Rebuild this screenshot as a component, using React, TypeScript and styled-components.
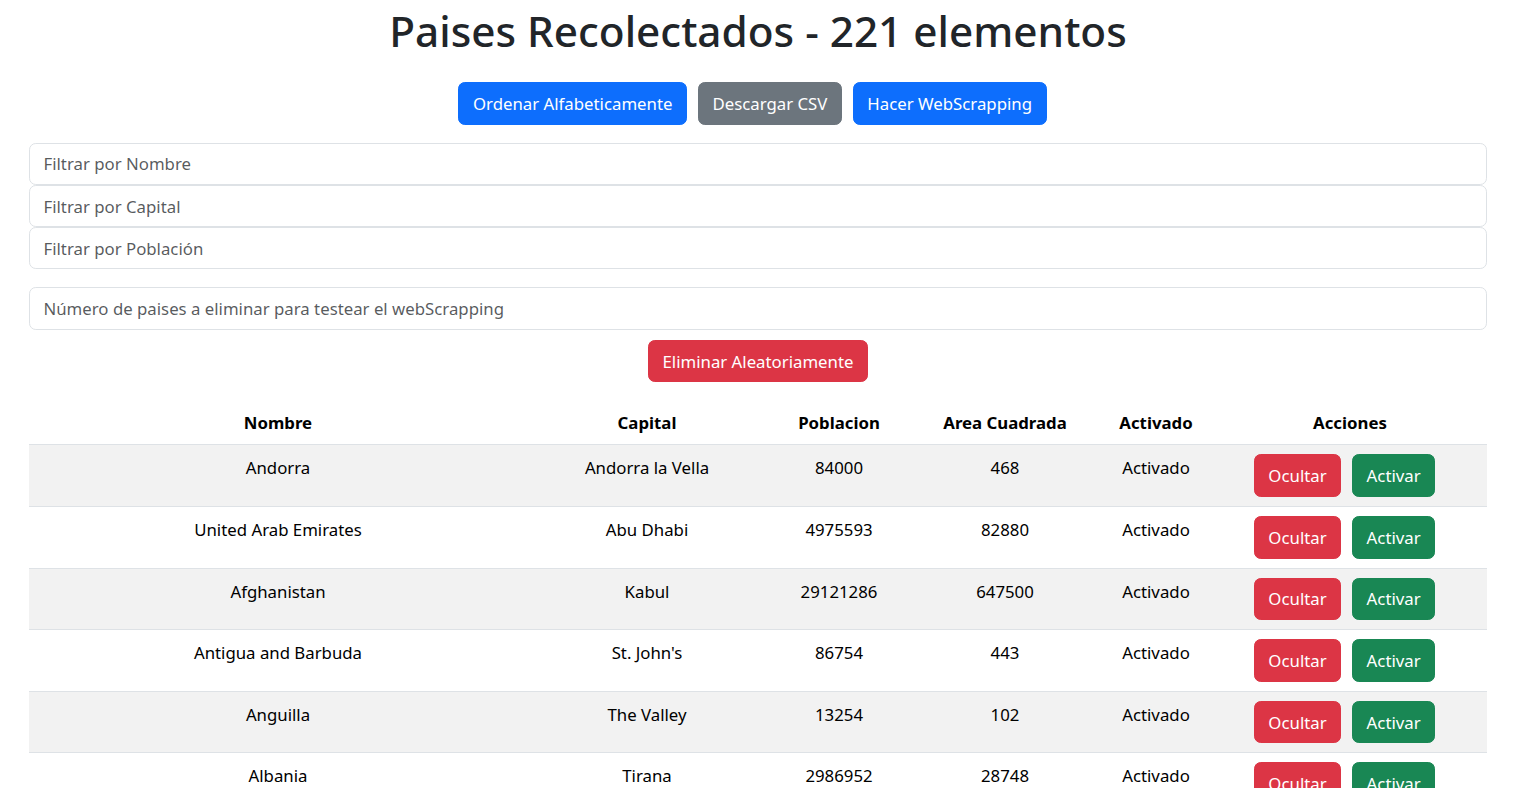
import React from "react";
import styled, { createGlobalStyle } from "styled-components";

const GlobalStyle = createGlobalStyle`
  html, body { margin: 0; padding: 0; background: #fff; }
  body {
    font-family: "Noto Sans", "Open Sans", sans-serif;
    font-size: 16.8px;
    line-height: 27px;
    color: #212529;
  }
  * { box-sizing: border-box; }
`;

const Page = styled.div`
  padding: 4px 38px 0 29px;
`;

const Title = styled.h1`
  margin: 0;
  text-align: center;
  font-size: 42.3px;
  line-height: 54px;
  font-weight: 500;
  color: #212529;
`;

const ButtonRow = styled.div`
  display: flex;
  justify-content: center;
  margin-top: 24px;
`;

const variants: Record<string, string> = {
  primary: "#0d6efd",
  secondary: "#6c757d",
  danger: "#dc3545",
  success: "#198754",
};

const Btn = styled.button<{ $variant: string; $trail?: boolean }>`
  height: 42.6px;
  padding: 0 13.5px;
  border: 1px solid ${(p) => variants[p.$variant]};
  background: ${(p) => variants[p.$variant]};
  color: #fff;
  border-radius: 6.75px;
  font-family: inherit;
  font-size: 16.8px;
  line-height: 27px;
  font-weight: 400;
  cursor: pointer;
  margin-right: ${(p) => (p.$trail ? "11px" : "0")};
  white-space: nowrap;
`;

const FilterStack = styled.div`
  display: flex;
  flex-direction: column;
  margin-top: 18px;
`;

const Input = styled.input`
  display: block;
  width: 100%;
  height: 42.3px;
  padding: 0 13.5px;
  border: 1px solid #dee2e6;
  border-radius: 6.75px;
  font-family: inherit;
  font-size: 16.8px;
  color: #212529;
  background: #fff;
  outline: none;
  &::placeholder { color: rgba(33, 37, 41, 0.75); }
`;

const TestInput = styled(Input)`
  margin-top: 18px;
`;

const CenterRow = styled.div`
  display: flex;
  justify-content: center;
  margin-top: 10px;
`;

const Table = styled.table`
  width: 100%;
  margin-top: 18px;
  border-collapse: collapse;
  table-layout: fixed;
  color: #000;
`;

const Th = styled.th`
  padding: 8.5px 9px;
  line-height: 27px;
  font-weight: 700;
  text-align: center;
  vertical-align: top;
  border-bottom: 1px solid #dee2e6;
`;

const Tr = styled.tr<{ $striped: boolean }>`
  background: ${(p) => (p.$striped ? "#f2f2f2" : "#fff")};
`;

const Td = styled.td`
  padding: 9px;
  line-height: 27px;
  text-align: center;
  vertical-align: top;
  border-bottom: 1px solid #dee2e6;
`;

const Actions = styled.div`
  display: flex;
  justify-content: center;
`;

const cols = [498, 240, 144, 188, 114];

const rows = [
  ["Andorra", "Andorra la Vella", "84000", "468"],
  ["United Arab Emirates", "Abu Dhabi", "4975593", "82880"],
  ["Afghanistan", "Kabul", "29121286", "647500"],
  ["Antigua and Barbuda", "St. John's", "86754", "443"],
  ["Anguilla", "The Valley", "13254", "102"],
  ["Albania", "Tirana", "2986952", "28748"],
  ["Armenia", "Yerevan", "2968000", "29800"],
  ["Angola", "Luanda", "13068161", "1246700"],
];

export default function App() {
  return (
    <>
      <GlobalStyle />
      <Page>
        <Title>Paises Recolectados - 221 elementos</Title>
        <ButtonRow>
          <Btn $variant="primary" $trail>Ordenar Alfabeticamente</Btn>
          <Btn $variant="secondary" $trail>Descargar CSV</Btn>
          <Btn $variant="primary" $trail>Hacer WebScrapping</Btn>
        </ButtonRow>
        <FilterStack>
          <Input placeholder="Filtrar por Nombre" />
          <Input placeholder="Filtrar por Capital" />
          <Input placeholder="Filtrar por Población" />
        </FilterStack>
        <TestInput placeholder="Número de paises a eliminar para testear el webScrapping" />
        <CenterRow>
          <Btn $variant="danger">Eliminar Aleatoriamente</Btn>
        </CenterRow>
        <Table>
          <colgroup>
            {cols.map((w, i) => (
              <col key={i} style={{ width: w }} />
            ))}
            <col />
          </colgroup>
          <thead>
            <tr>
              <Th>Nombre</Th>
              <Th>Capital</Th>
              <Th>Poblacion</Th>
              <Th>Area Cuadrada</Th>
              <Th>Activado</Th>
              <Th>Acciones</Th>
            </tr>
          </thead>
          <tbody>
            {rows.map((r, i) => (
              <Tr key={r[0]} $striped={i % 2 === 0}>
                <Td>{r[0]}</Td>
                <Td>{r[1]}</Td>
                <Td>{r[2]}</Td>
                <Td>{r[3]}</Td>
                <Td>Activado</Td>
                <Td>
                  <Actions>
                    <Btn $variant="danger" $trail>Ocultar</Btn>
                    <Btn $variant="success" $trail>Activar</Btn>
                  </Actions>
                </Td>
              </Tr>
            ))}
          </tbody>
        </Table>
      </Page>
    </>
  );
}
